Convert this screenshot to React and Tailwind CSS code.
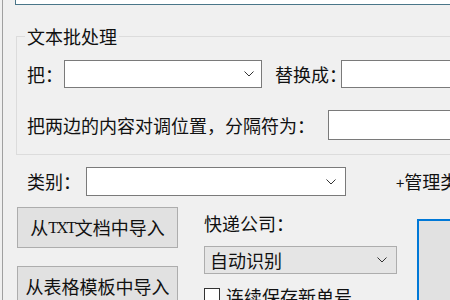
import React from "react";

function Chevron() {
  return (
    <svg width="10" height="6" viewBox="0 0 10 6" className="shrink-0">
      <polyline points="0.5,0.5 5,5 9.5,0.5" fill="none" stroke="#333" strokeWidth="1" />
    </svg>
  );
}

export default function App() {
  return (
    <div className="w-[450px] h-[300px] overflow-hidden bg-[#f0f0f0] text-[18px] text-[#111] font-['Noto_Sans_CJK_SC',sans-serif]">
      <div className="ml-[2px] h-full w-[700px] border-l border-[#a0a0a0]">
        {/* top input, mostly scrolled off */}
        <div className="ml-[12px] h-[5px] w-[600px] border-x border-b border-[#4a7689] bg-white" />

        {/* 文本批处理 */}
        <fieldset className="ml-[13px] mt-[20px] w-[600px] border border-[#dcdcdc] pl-[8px] pb-[14px]">
          <legend className="px-[2px] leading-[22px]">文本批处理</legend>
          <div className="mt-[13px] flex h-[28px] items-center pl-[2px]">
            <span className="w-[37px] shrink-0">把：</span>
            <div className="flex h-full w-[198px] shrink-0 items-center justify-end border border-[#7a7a7a] bg-white pr-[7px]">
              <Chevron />
            </div>
            <span className="ml-[13px] w-[66px] shrink-0 whitespace-nowrap">替换成：</span>
            <div className="h-full w-[300px] shrink-0 border border-[#7a7a7a] bg-white" />
          </div>
          <div className="mt-[22px] flex h-[30px] items-center pl-[2px]">
            <span className="w-[301px] shrink-0 whitespace-nowrap">把两边的内容对调位置，分隔符为：</span>
            <div className="h-full w-[300px] shrink-0 border border-[#7a7a7a] bg-white" />
          </div>
        </fieldset>

        {/* 类别 */}
        <div className="mt-[12px] flex h-[29px] items-center pl-[24px]">
          <span className="w-[59px] shrink-0">类别：</span>
          <div className="flex h-full w-[260px] shrink-0 items-center justify-end border border-[#7a7a7a] bg-white pr-[9px]">
            <Chevron />
          </div>
          <span className="ml-[50px] whitespace-nowrap">
            <span className="text-[15px]">+</span>管理类别
          </span>
        </div>

        {/* bottom area */}
        <div className="mt-[11px] flex pl-[14px]">
          <div className="flex w-[161px] shrink-0 flex-col gap-[18px]">
            <button className="flex h-[41px] items-center justify-center border border-[#adadad] bg-[#e1e1e1]">
              从<span className="font-['Liberation_Serif',serif] text-[16px] tracking-[-1.5px]">TXT</span>文档中导入
            </button>
            <button className="flex h-[41px] items-center justify-center whitespace-nowrap border border-[#adadad] bg-[#e1e1e1]">
              从表格模板中导入
            </button>
          </div>

          <div className="ml-[26px] flex w-[193px] shrink-0 flex-col">
            <span className="mt-[4px] leading-[24px]">快递公司：</span>
            <div className="mt-[11px] flex h-[28px] items-center justify-between border border-[#adadad] bg-[#e5e5e5] pl-[5px] pr-[9px]">
              <span>自动识别</span>
              <Chevron />
            </div>
            <div className="mt-[12px] flex items-center">
              <div className="h-[16px] w-[16px] shrink-0 border border-[#333] bg-white" />
              <span className="ml-[6px] whitespace-nowrap leading-[20px]">连续保存新单号</span>
            </div>
          </div>

          <div className="ml-[20px] mt-[12px] h-[200px] w-[200px] shrink-0 border-2 border-[#0078d7] bg-[#e1e1e1]" />
        </div>
      </div>
    </div>
  );
}
